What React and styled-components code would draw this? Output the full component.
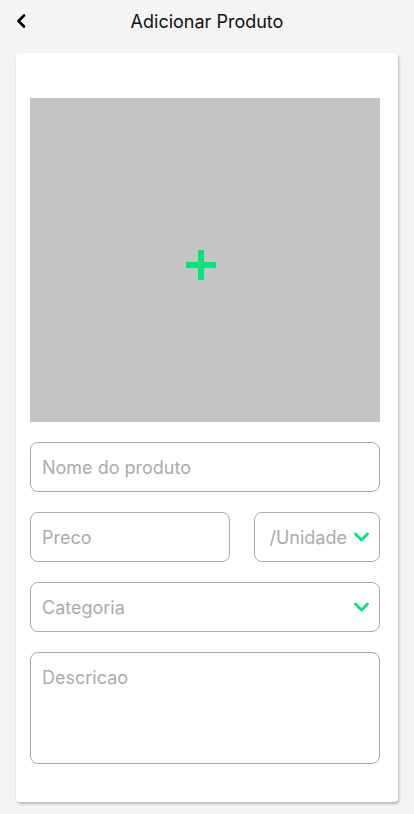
import React from 'react';
import styled, { createGlobalStyle } from 'styled-components';

const GlobalStyle = createGlobalStyle`
  * { box-sizing: border-box; }
  body {
    margin: 0;
    background: #f4f4f4;
    font-family: Inter, "Noto Sans", sans-serif;
  }
`;

const Page = styled.div`
  width: 414px;
  min-height: 814px;
  padding: 0 16px 12px;
`;

const Header = styled.header`
  height: 53px;
  display: flex;
  align-items: center;
  justify-content: center;
  position: relative;
  padding-bottom: 11px;
`;

const BackButton = styled.button`
  position: absolute;
  left: 0;
  top: 12px;
  width: 14px;
  height: 18px;
  border: none;
  background: none;
  padding: 0;
  display: flex;
  align-items: center;
  cursor: pointer;
`;

const Title = styled.h1`
  margin: 0;
  font-size: 18px;
  font-weight: 400;
  color: #111;
`;

const Card = styled.div`
  background: white;
  border-radius: 4px;
  padding: 45px 18px 38px 14px;
  box-shadow: 1px 2px 3px rgba(0, 0, 0, 0.25);
  display: flex;
  flex-direction: column;
  gap: 20px;
`;

const ImagePicker = styled.div`
  height: 324px;
  background: #c4c4c4;
  display: flex;
  align-items: center;
  justify-content: center;
  padding: 10px 8px 0 0;
  cursor: pointer;
`;

const Row = styled.div`
  display: flex;
  gap: 24px;
`;

const Field = styled.div`
  flex: ${p => p.$flex || 'none'};
  min-width: 0;
  width: ${p => p.$width || 'auto'};
  height: ${p => p.$height || 50}px;
  border: 1px solid #ababab;
  border-radius: 8px;
  display: flex;
  align-items: ${p => (p.$multiline ? 'flex-start' : 'center')};
  padding: ${p => (p.$multiline ? '14px 11px' : '0 9px 0 11px')};
`;

const Input = styled.input`
  flex: 1;
  min-width: 0;
  width: 100%;
  border: none;
  outline: none;
  background: transparent;
  font-family: inherit;
  font-size: 18px;
  color: #333;
  padding: 0;
  &::placeholder { color: #ababab; }
`;

const TextArea = styled.textarea`
  flex: 1;
  height: 100%;
  border: none;
  outline: none;
  resize: none;
  background: transparent;
  font-family: inherit;
  font-size: 18px;
  color: #333;
  padding: 0;
  &::placeholder { color: #ababab; }
`;

const SelectText = styled.span`
  flex: 1;
  font-size: 18px;
  color: #ababab;
  text-align: ${p => p.$align || 'left'};
  white-space: nowrap;
`;

const Chevron = () => (
  <svg width="17" height="16" viewBox="0 0 17 16" style={{ marginLeft: 6, flexShrink: 0 }}>
    <path d="M2.5 5 L8.5 11 L14.5 5" fill="none" stroke="#00e676" strokeWidth="2.8" strokeLinecap="round" strokeLinejoin="round" />
  </svg>
);

export default function App() {
  return (
    <>
      <GlobalStyle />
      <Page>
        <Header>
          <BackButton aria-label="Voltar">
            <svg width="12" height="16" viewBox="0 0 12 16">
              <path d="M8 2.5 L2.5 8 L8 13.5" fill="none" stroke="#000" strokeWidth="2.6" strokeLinecap="round" strokeLinejoin="round" />
            </svg>
          </BackButton>
          <Title>Adicionar Produto</Title>
        </Header>
        <Card>
          <ImagePicker>
            <svg width="30" height="30" viewBox="0 0 30 30">
              <rect x="12" y="0" width="6" height="30" fill="#00e676" />
              <rect x="0" y="12" width="30" height="6" fill="#00e676" />
            </svg>
          </ImagePicker>
          <Field>
            <Input placeholder="Nome do produto" />
          </Field>
          <Row>
            <Field $flex="1">
              <Input placeholder="Preco" />
            </Field>
            <Field $width="126px">
              <SelectText $align="right">/Unidade</SelectText>
              <Chevron />
            </Field>
          </Row>
          <Field>
            <SelectText>Categoria</SelectText>
            <Chevron />
          </Field>
          <Field $height={112} $multiline>
            <TextArea placeholder="Descricao" />
          </Field>
        </Card>
      </Page>
    </>
  );
}
